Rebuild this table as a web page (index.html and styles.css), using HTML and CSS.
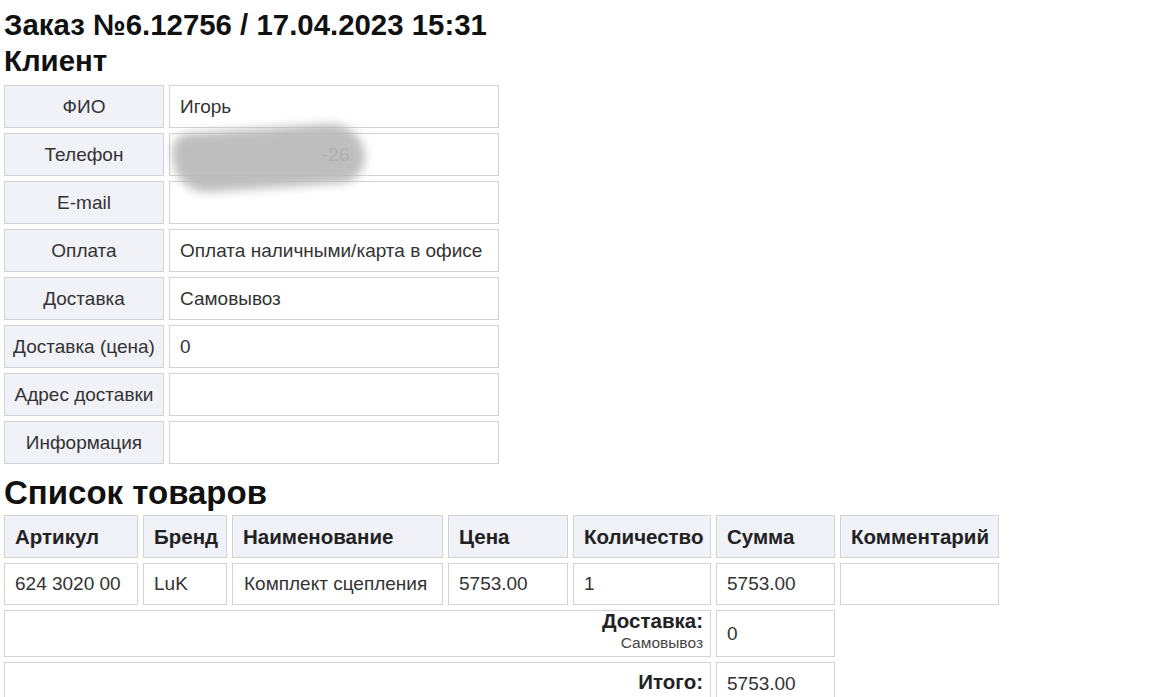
FILE: index.html
```html
<!DOCTYPE html>
<html lang="ru">
<head>
<meta charset="utf-8">
<title>Заказ №6.12756</title>
<link rel="stylesheet" href="styles.css">
</head>
<body>
<h1 class="title">Заказ №6.12756 / 17.04.2023 15:31</h1>
<h2 class="subtitle">Клиент</h2>
<table class="client">
  <tr><td class="lbl">ФИО</td><td class="val">Игорь</td></tr>
  <tr><td class="lbl">Телефон</td><td class="val phone"><span class="blur"></span><span class="phone-text">-26</span></td></tr>
  <tr><td class="lbl">E-mail</td><td class="val"></td></tr>
  <tr><td class="lbl">Оплата</td><td class="val">Оплата наличными/карта в офисе</td></tr>
  <tr><td class="lbl">Доставка</td><td class="val">Самовывоз</td></tr>
  <tr><td class="lbl">Доставка (цена)</td><td class="val">0</td></tr>
  <tr><td class="lbl">Адрес доставки</td><td class="val"></td></tr>
  <tr><td class="lbl">Информация</td><td class="val"></td></tr>
</table>
<h2 class="section">Список товаров</h2>
<table class="goods">
  <colgroup>
    <col class="c1"><col class="c2"><col class="c3"><col class="c4"><col class="c5"><col class="c6"><col class="c7">
  </colgroup>
  <tr class="head">
    <th>Артикул</th>
    <th>Бренд</th>
    <th>Наименование</th>
    <th>Цена</th>
    <th>Количество</th>
    <th>Сумма</th>
    <th>Комментарий</th>
  </tr>
  <tr class="row">
    <td>624 3020 00</td>
    <td>LuK</td>
    <td class="name">Комплект сцепления</td>
    <td>5753.00</td>
    <td>1</td>
    <td>5753.00</td>
    <td></td>
  </tr>
  <tr class="total">
    <td colspan="5" class="tlabel"><b>Доставка:</b><br><span class="small">Самовывоз</span></td>
    <td>0</td>
  </tr>
  <tr class="total">
    <td colspan="5" class="tlabel"><b>Итого:</b></td>
    <td>5753.00</td>
  </tr>
</table>
</body>
</html>
```

FILE: styles.css
```css
html, body {
  margin: 0;
  padding: 0;
  background: #ffffff;
}
body {
  padding: 7px 4px 0 4px;
  font-family: "Liberation Sans", Arial, sans-serif;
  color: #222;
}
.title, .subtitle {
  margin: 0;
  font-size: 29.4px;
  line-height: 36px;
  font-weight: bold;
  color: #111;
}
.section {
  margin: 7px 0 0 0;
  font-size: 33px;
  line-height: 44px;
  font-weight: bold;
  color: #111;
}
table {
  border-collapse: separate;
  border-spacing: 5px;
  margin-left: -5px;
}
.client {
  margin-top: 1px;
  margin-bottom: -5px;
}
td, th {
  border: 1px solid #d3d3d3;
  font-size: 19px;
  padding: 0 10px;
  box-sizing: border-box;
  white-space: nowrap;
  overflow: hidden;
}
.client td {
  height: 43px;
}
.lbl {
  width: 160px;
  background: #f1f1f8;
  text-align: center;
  padding: 0 2px;
  color: #333;
}
.val {
  width: 330px;
  text-align: left;
  color: #333;
}
.phone {
  position: relative;
  overflow: visible;
}
.phone-text {
  position: relative;
  margin-left: 142px;
  color: #a6a6a6;
  opacity: 0.6;
}
.blur {
  position: absolute;
  left: 3px;
  top: -6px;
  width: 192px;
  height: 60px;
  background: #b8b8b8;
  border-radius: 20px 40px 30px 40px;
  filter: blur(5px);
  transform: rotate(-4deg);
  opacity: 0.9;
}
.goods {
  margin-top: -5px;
  table-layout: fixed;
  width: 1005px;
}
.goods th {
  background: #f1f1f8;
  text-align: left;
  font-size: 20.5px;
  color: #222;
  height: 43px;
  padding: 0 8px 0 10px;
}
.goods td {
  height: 42px;
  color: #333;
}
.c1 { width: 134px; }
.c2 { width: 84px; }
.c3 { width: 211px; }
.c4 { width: 120px; }
.c5 { width: 138px; }
.c6 { width: 119px; }
.c7 { width: 159px; }
.name {
  padding-left: 11px;
}
.goods .total td {
  height: 44px;
}
.goods .tlabel {
  text-align: right;
  line-height: 20px;
  padding: 0 7px 3px 7px;
}
.tlabel b {
  font-size: 20.5px;
  color: #222;
}
.small {
  font-size: 15.5px;
  color: #444;
}
```
